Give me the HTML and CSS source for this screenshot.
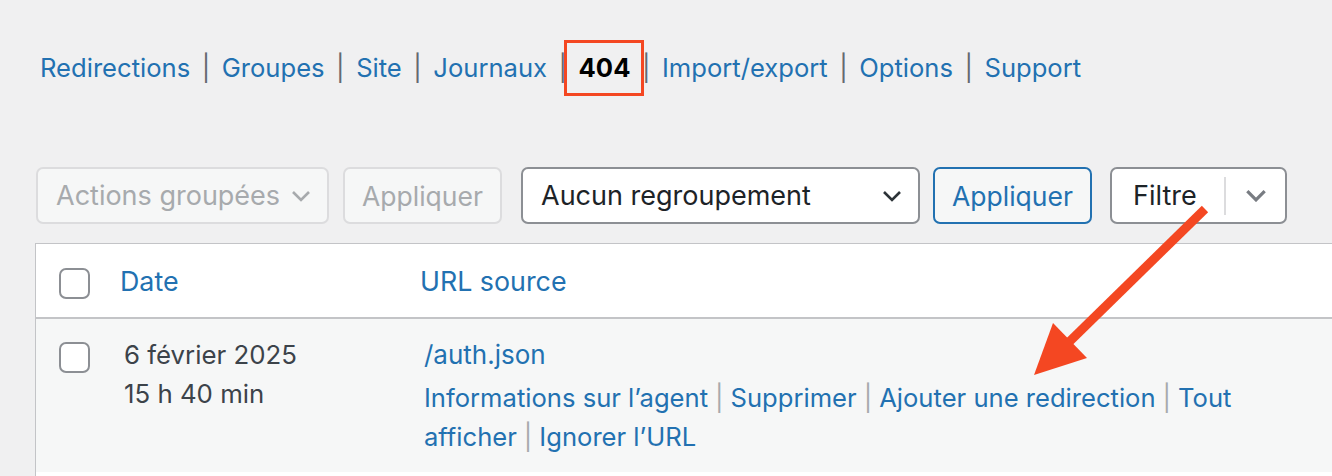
FILE: index.html
```html
<!DOCTYPE html>
<html lang="fr">
<head>
<meta charset="utf-8">
<title>Redirection – 404</title>
<link rel="stylesheet" href="styles.css">
</head>
<body>
<div class="wrap">
  <ul class="subsubsub">
    <li><a href="#">Redirections</a><span class="sep">|</span></li>
    <li><a href="#">Groupes</a><span class="sep">|</span></li>
    <li><a href="#">Site</a><span class="sep">|</span></li>
    <li><a href="#">Journaux</a><span class="sep">|</span></li>
    <li><span class="current">404</span><span class="sep">|</span></li>
    <li><a href="#">Import/export</a><span class="sep">|</span></li>
    <li><a href="#">Options</a><span class="sep">|</span></li>
    <li><a href="#">Support</a></li>
  </ul>

  <div class="tablenav">
    <div class="btn select disabled bulk">
      <span>Actions groupées</span>
      <svg class="chev" viewBox="0 0 20 12" width="20" height="12"><polyline points="2,2 10,10 18,2"/></svg>
    </div>
    <div class="btn disabled apply">Appliquer</div>
    <div class="btn select group">
      <span>Aucun regroupement</span>
      <svg class="chev dark" viewBox="0 0 20 12" width="20" height="12"><polyline points="2,2 10,10 18,2"/></svg>
    </div>
    <div class="btn primary apply">Appliquer</div>
    <div class="btn filter">
      <span class="filter-label">Filtre</span>
      <span class="filter-div"></span>
      <svg class="chev mid" viewBox="0 0 20 12" width="22" height="13"><polyline points="2,2 10,10 18,2"/></svg>
    </div>
  </div>

  <div class="list-table">
    <div class="tr thead">
      <div class="cell cb"><span class="checkbox"></span></div>
      <div class="cell date"><a href="#">Date</a></div>
      <div class="cell url"><a href="#">URL source</a></div>
    </div>
    <div class="tr row alt">
      <div class="cell cb"><span class="checkbox"></span></div>
      <div class="cell date"><div>6 février 2025</div><div>15 h 40 min</div></div>
      <div class="cell url">
        <div><a href="#">/auth.json</a></div>
        <div class="row-actions"><a href="#">Informations sur l’agent</a><span class="rsep">|</span><a href="#">Supprimer</a><span class="rsep">|</span><a href="#">Ajouter une redirection</a><span class="rsep">|</span><a href="#">Tout afficher</a><span class="rsep">|</span><a href="#">Ignorer l’URL</a></div>
      </div>
    </div>
    <div class="tr row blank"></div>
  </div>
</div>

<svg class="annot-arrow" width="1332" height="476" viewBox="0 0 1332 476">
  <line x1="1205" y1="209" x2="1066" y2="345" />
  <polygon points="1034,375 1053,323 1087,358" />
</svg>
</body>
</html>
```

FILE: styles.css
```css
html, body {
  margin: 0;
  padding: 0;
}
body {
  background: #f0f0f1;
  font-family: Inter, "Noto Sans", "Liberation Sans", sans-serif;
  color: #3c434a;
  width: 1332px;
  height: 476px;
  overflow: hidden;
  position: relative;
}
a {
  color: #2271b1;
  text-decoration: none;
}
.wrap {
  padding-left: 35px;
}

/* nav */
.subsubsub {
  list-style: none;
  margin: 0;
  padding: 48px 0 0 5px;
  display: flex;
  font-size: 25.6px;
  line-height: 40px;
  height: 40px;
}
.subsubsub li {
  display: flex;
  white-space: nowrap;
}
.subsubsub .sep {
  color: #646970;
  margin: 0 11.5px;
}
.subsubsub .current {
  color: #000;
  font-weight: 700;
  position: relative;
}
.subsubsub .current::after {
  content: "";
  position: absolute;
  left: -15px;
  right: -14px;
  top: -8px;
  bottom: -8px;
  border: 3px solid #f44722;
}

/* toolbar */
.tablenav {
  display: flex;
  margin-top: 79px;
  height: 57px;
}
.btn {
  box-sizing: border-box;
  height: 57px;
  border: 2px solid #8c8f94;
  border-radius: 7px;
  background: #fff;
  font-size: 27px;
  color: #1d2327;
  display: flex;
  align-items: center;
  white-space: nowrap;
}
.btn.disabled {
  background: #f6f7f7;
  border-color: #dcdcde;
  color: #a7aaad;
}
.btn.apply {
  width: 159px;
  justify-content: center;
  font-size: 26.5px;
}
.btn.select {
  justify-content: space-between;
  padding: 0 16px 0 18px;
}
.btn.bulk {
  width: 293px;
  margin-left: 1px;
  margin-right: 14px;
}
.btn.bulk + .apply {
  margin-right: 19px;
}
.btn.group {
  width: 399px;
  margin-right: 13px;
}
.btn.primary {
  border-color: #2271b1;
  color: #2271b1;
  background: #f6f7f7;
  margin-right: 18px;
}
.btn.filter {
  width: 177px;
  padding-left: 21px;
}
.filter-label {
  width: 91px;
}
.filter-div {
  width: 2px;
  height: 38px;
  background: #dcdcde;
  margin-right: 19px;
}
.chev {
  fill: none;
  stroke: #a7aaad;
  stroke-width: 2.6;
}
.chev.dark {
  stroke: #2c3338;
}
.chev.mid {
  stroke: #787c82;
  stroke-width: 3;
}

/* table */
.list-table {
  margin-top: 19px;
  width: 1400px;
  border: 1px solid #c3c4c7;
  border-right: none;
  background: #fff;
  font-size: 26px;
}
.tr {
  display: grid;
  grid-template-columns: 68px 300px 1fr;
}
.thead {
  height: 73px;
  border-bottom: 2px solid #c3c4c7;
  box-sizing: content-box;
  align-items: start;
  font-size: 26.8px;
}
.thead .cell {
  line-height: 40px;
}
.thead .cb {
  padding: 24px 0 0 23px;
}
.thead .date, .thead .url {
  padding: 17px 0 0 16px;
}
.checkbox {
  display: block;
  box-sizing: border-box;
  width: 31px;
  height: 31px;
  border: 2px solid #8c8f94;
  border-radius: 7px;
  background: #fff;
}
.row.alt {
  background: #f6f7f7;
  height: 153px;
  box-sizing: border-box;
  padding-top: 16px;
  line-height: 39px;
}
.row .cb {
  padding: 7px 0 0 23px;
}
.row .date, .row .url {
  padding-left: 20px;
}
.row .date {
  color: #3c434a;
  font-size: 25.8px;
}
.row-actions {
  margin-top: 4px;
  font-size: 25.6px;
  width: 820px;
}
.rsep {
  color: #a7aaad;
  margin: 0 7px;
}
.row.blank {
  height: 20px;
}

/* annotation overlay */
.annot-arrow {
  position: absolute;
  left: 0;
  top: 0;
  pointer-events: none;
}
.annot-arrow line {
  stroke: #f44722;
  stroke-width: 9;
}
.annot-arrow polygon {
  fill: #f44722;
}
```
